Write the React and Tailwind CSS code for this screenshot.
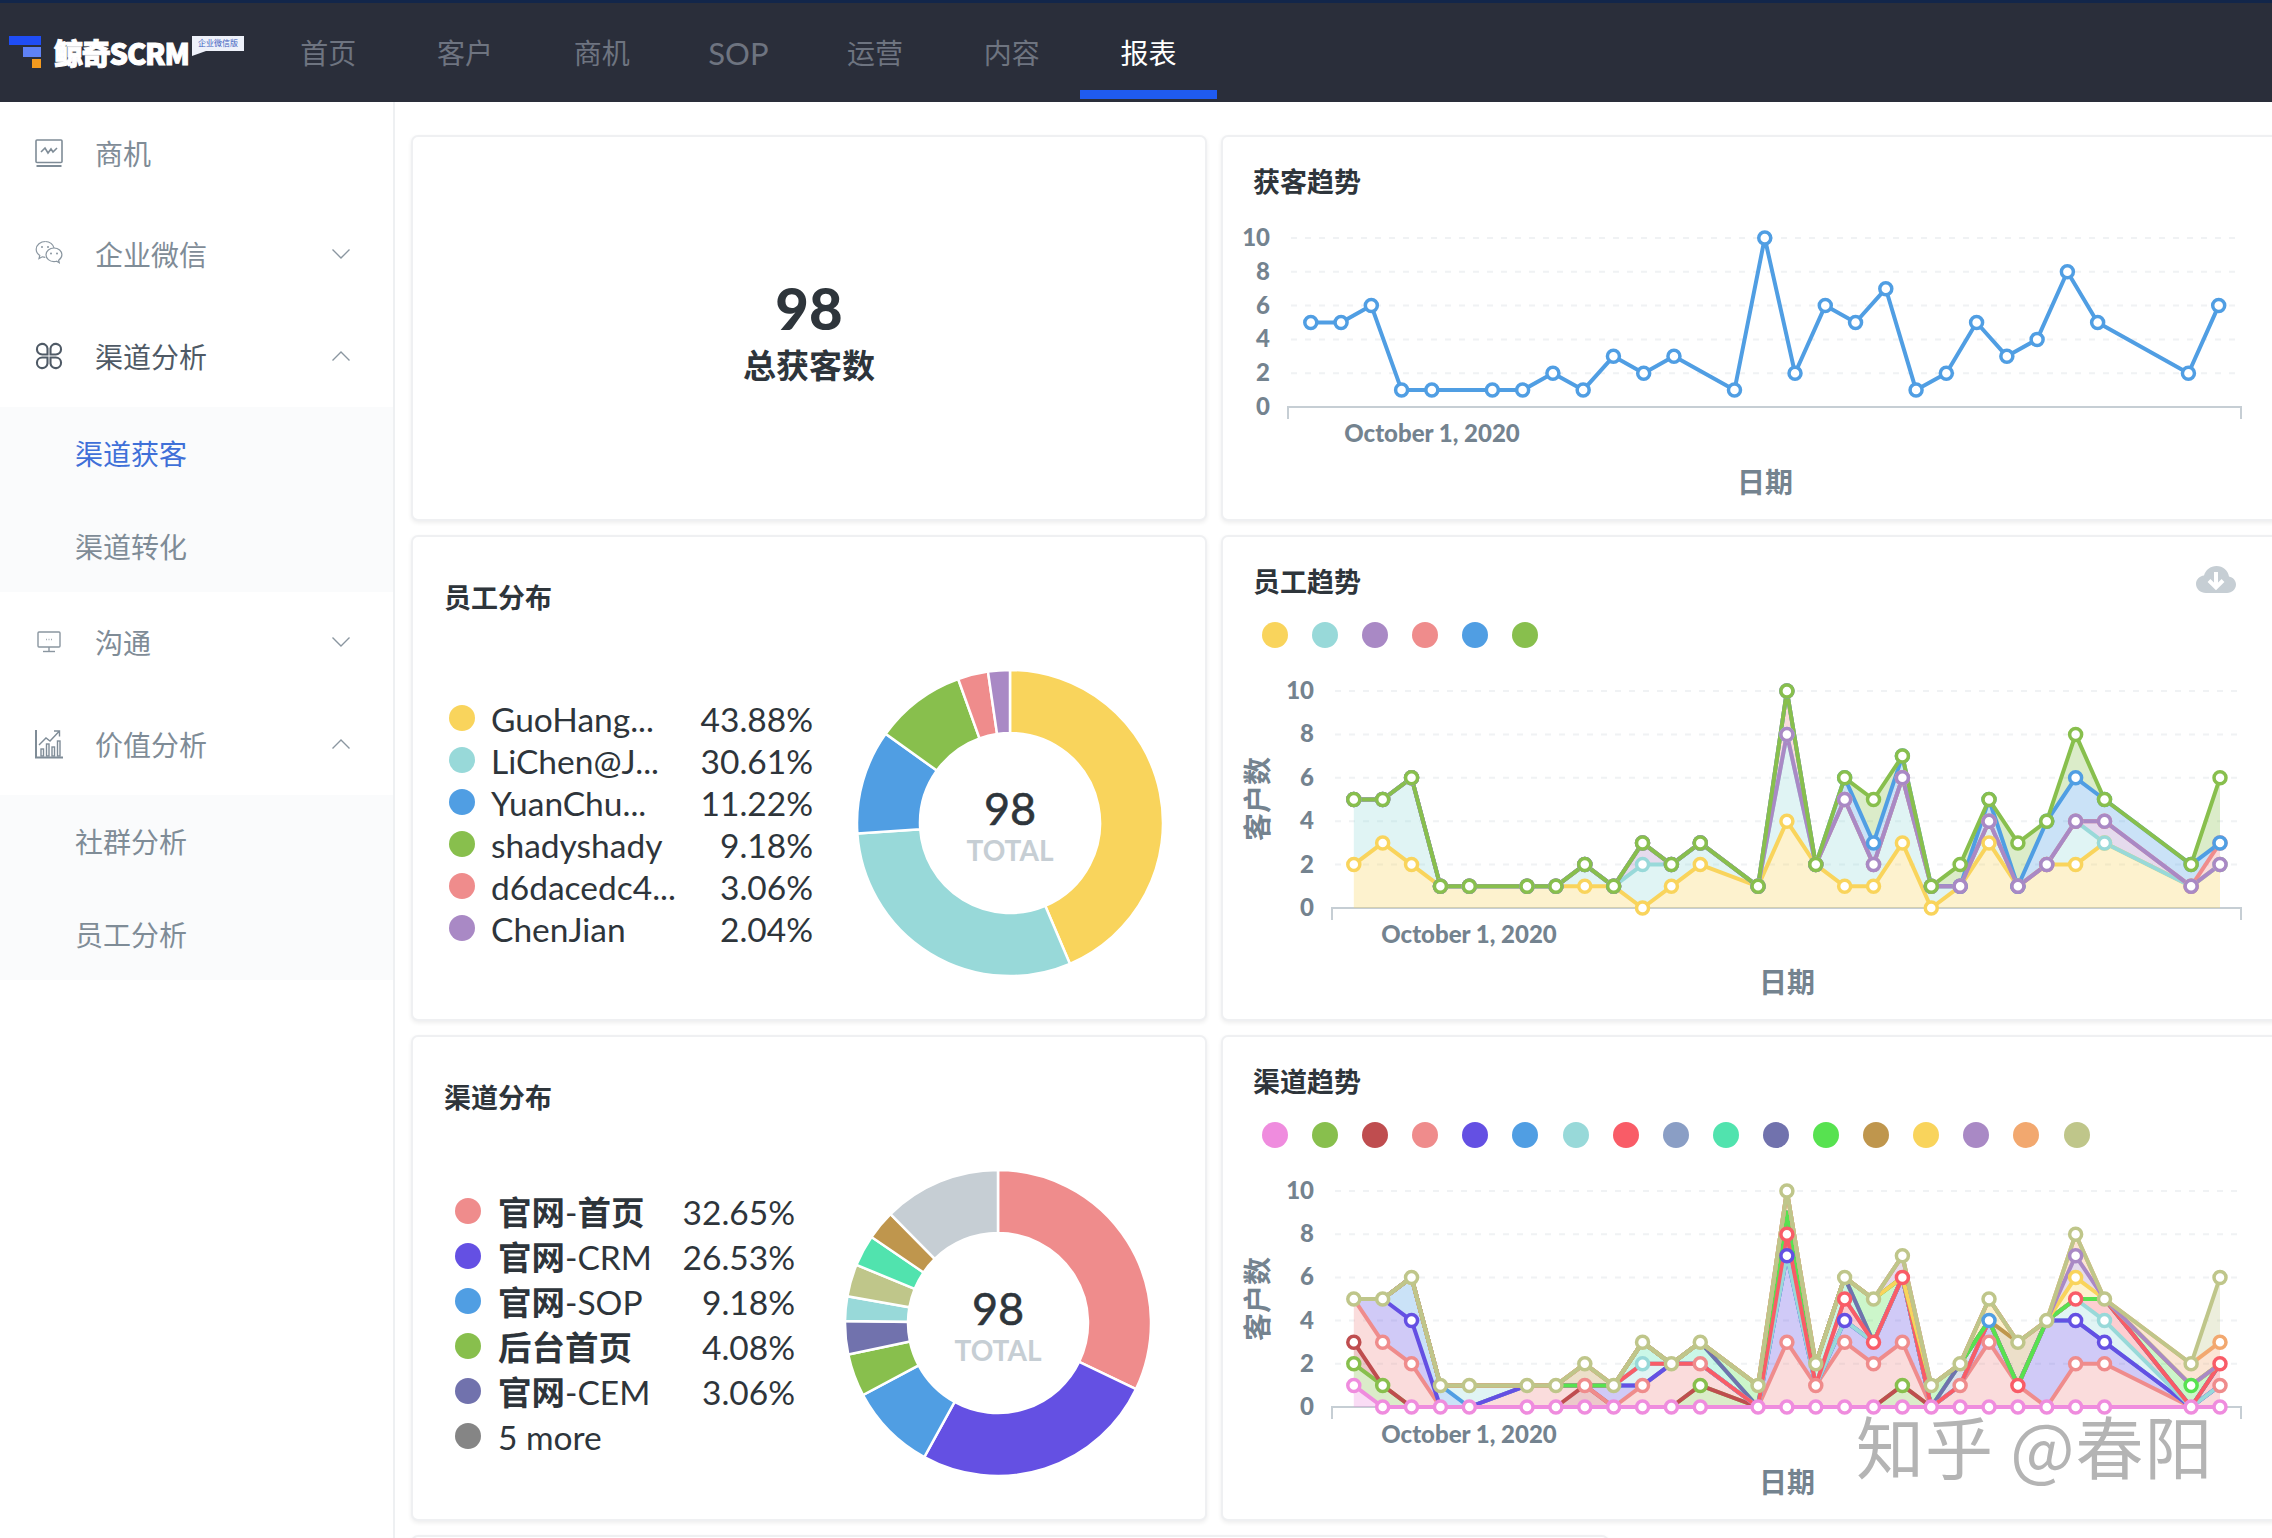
import React from "react";

const C = {
  yellow: "#F9D45C", teal: "#98D9D9", purple: "#A989C5", coral: "#EF8C8C", blue: "#509EE3", green: "#88BF4D",
  pink: "#EF8CDE", red: "#BF4D4F", indigo: "#6450E3", red2: "#F95C67", slate: "#8A9EC5", mint: "#51E3AE",
  ind2: "#7172AD", green2: "#57E250", brown: "#BF964D", orange: "#F2A86F", khaki: "#BFC68A", gray: "#C6CED4",
};

const IDX = [0,1,2,3,4,6,7,8,9,10,11,12,14,15,16,17,18,19,20,21,22,23,24,25,26,29,30];
const TOTAL = [5,5,6,1,1,1,1,2,1,3,2,3,1,10,2,6,5,7,1,2,5,3,4,8,5,2,6];

const S2 = [
  { c: C.yellow, z: 0, v: [2,3,2,1,1,1,1,1,1,0,1,2,1,4,2,1,1,3,0,1,3,1,2,2,3,1,2] },
  { c: C.teal, z: 1, v: [5,5,6,1,1,1,1,2,1,2,2,3,1,8,2,5,2,6,1,1,4,1,2,4,3,1,2] },
  { c: C.purple, z: 4, v: [5,5,6,1,1,1,1,2,1,3,2,3,1,8,2,5,2,6,1,1,4,1,2,4,4,1,2] },
  { c: C.coral, z: 2, v: [5,5,6,1,1,1,1,2,1,3,2,3,1,10,2,5,2,6,1,1,4,1,2,4,4,1,3] },
  { c: C.blue, z: 3, v: [5,5,6,1,1,1,1,2,1,3,2,3,1,10,2,6,3,7,1,1,5,1,4,6,5,2,3] },
  { c: C.green, z: 5, v: TOTAL },
];

const S3 = [
  { c: C.pink, z: 99, v: [1,0,0,0,0,0,0,0,0,0,0,0,0,0,0,0,0,0,0,0,0,0,0,0,0,0,0] },
  { c: C.green, z: 1, dots: [0,1,11,17], v: [2,1,0,0,0,0,0,0,0,0,0,1,0,0,0,0,0,1,0,0,0,0,0,0,0,0,0] },
  { c: C.red, z: 2, dots: [0], v: [3,1,0,0,0,0,0,1,0,0,0,1,0,0,0,0,0,1,0,0,0,0,0,0,0,0,0] },
  { c: C.coral, z: 3, dots: [1,2,7,9,11,13,14,15,16,17,19,20,23,24,26], v: [5,3,2,0,0,1,1,1,0,1,2,2,0,3,1,3,2,3,0,1,3,1,0,2,2,0,1] },
  { c: C.indigo, z: 5, dots: [2,13,15,23,24], v: [5,5,4,0,0,1,1,1,1,1,2,2,0,7,1,4,3,6,0,1,4,1,4,4,3,0,1] },
  { c: C.blue, z: 4, dots: [20], v: [5,5,6,1,0,1,1,1,1,1,2,2,0,7,1,4,3,6,0,1,4,1,4,4,3,0,1] },
  { c: C.teal, z: 6, dots: [9,24], v: [5,5,6,1,1,1,1,1,1,2,2,2,0,7,1,4,3,6,0,1,4,1,4,5,4,0,1] },
  { c: C.red2, z: 7, dots: [13,15,16,17,21,23,26], v: [5,5,6,1,1,1,1,1,1,2,2,2,0,8,1,5,3,6,0,1,4,1,4,5,5,0,2] },
  { c: C.slate, z: 1, dots: [], v: [5,5,6,1,1,1,1,1,1,2,2,2,0,8,1,5,3,6,0,2,4,1,4,5,5,0,2] },
  { c: C.mint, z: 1, dots: [], v: [5,5,6,1,1,1,1,1,1,3,2,3,0,9,2,6,3,6,0,2,4,1,4,5,5,0,2] },
  { c: C.ind2, z: 1, dots: [], v: [5,5,6,1,1,1,1,1,1,3,2,3,0,9,2,6,3,6,0,2,4,1,4,5,5,0,2] },
  { c: C.green2, z: 8, dots: [25], v: [5,5,6,1,1,1,1,1,1,3,2,3,1,9,2,6,5,6,1,2,4,1,4,5,5,1,2] },
  { c: C.brown, z: 1, dots: [], v: [5,5,6,1,1,1,1,2,1,3,2,3,1,9,2,6,5,6,1,2,4,3,4,5,5,1,2] },
  { c: C.yellow, z: 9, dots: [23], v: [5,5,6,1,1,1,1,2,1,3,2,3,1,10,2,6,5,6,1,2,5,3,4,6,5,1,2] },
  { c: C.purple, z: 10, dots: [23], v: [5,5,6,1,1,1,1,2,1,3,2,3,1,10,2,6,5,7,1,2,5,3,4,7,5,1,2] },
  { c: C.orange, z: 11, dots: [26], v: [5,5,6,1,1,1,1,2,1,3,2,3,1,10,2,6,5,7,1,2,5,3,4,8,5,2,3] },
  { c: C.khaki, z: 12, v: TOTAL },
];
const LEG3 = [C.pink,C.green,C.red,C.coral,C.indigo,C.blue,C.teal,C.red2,C.slate,C.mint,C.ind2,C.green2,C.brown,C.yellow,C.purple,C.orange,C.khaki];

const LBL = "#74838F";

function Chart({ top, height, series, x0, x30, yTop, y0, axisL, yLabelX, dateX, dateY, xTitleX, xTitleY, yTitleY, area }) {
  const X = (i) => x0 + ((x30 - x0) * IDX[i]) / 30;
  const Y = (v) => y0 - ((y0 - yTop) * v) / 10;
  const pts = (v) => v.map((n, i) => `${X(i)},${Y(n)}`).join(" ");
  const order = [...series].sort((a, b) => (a.z || 0) - (b.z || 0));
  return (
    <svg width="1096" height={height} viewBox={`1223 ${top} 1096 ${height}`} className="block">
      {[2, 4, 6, 8, 10].map((t) => (
        <line key={t} x1={axisL + 3} x2="2241" y1={Y(t)} y2={Y(t)} stroke="#F0F2F4" strokeWidth="2" strokeDasharray="6 8" />
      ))}
      <path d={`M${axisL} ${y0 + 12}V${y0}H2241V${y0 + 12}`} fill="none" stroke="#C6CED4" strokeWidth="2" />
      {[0, 2, 4, 6, 8, 10].map((t) => (
        <text key={t} x={yLabelX} y={Y(t) + 8} textAnchor="end" fontSize="24" fontWeight="900" fill={LBL}>{t}</text>
      ))}
      {area && series.map((s, k) => {
        const lower = k === 0 ? s.v.map(() => 0) : series[k - 1].v;
        const poly = [...s.v.map((n, i) => `${X(i)},${Y(n)}`), ...lower.map((n, i) => `${X(i)},${Y(n)}`).reverse()].join(" ");
        return <polygon key={k} points={poly} fill={s.c} fillOpacity="0.3" />;
      })}
      {order.map((s, k) => (
        <polyline key={k} points={pts(s.v)} fill="none" stroke={s.c} strokeWidth="4" strokeLinejoin="round" />
      ))}
      {order.map((s, k) => (
        <g key={k}>
          {s.v.map((n, i) =>
            !s.dots || s.dots.includes(i) ? (
              <circle key={i} cx={X(i)} cy={Y(n)} r="6" fill="#fff" stroke={s.c} strokeWidth="3.5" />
            ) : null
          )}
        </g>
      ))}
      <text x={dateX} y={dateY + 8} textAnchor="middle" fontSize="24" fontWeight="900" fill={LBL}>October 1, 2020</text>
      <text x={xTitleX} y={xTitleY + 10} textAnchor="middle" fontSize="28" fontWeight="700" fill={LBL}>日期</text>
      {yTitleY && (
        <text transform={`translate(1268 ${yTitleY}) rotate(-90)`} textAnchor="middle" fontSize="28" fontWeight="700" fill={LBL}>客户数</text>
      )}
    </svg>
  );
}

function Donut({ data }) {
  const R = 153, r = 90, c = 153;
  let a = 0;
  const pt = (rad, ang) => [c + rad * Math.sin(ang), c - rad * Math.cos(ang)];
  return (
    <svg width="306" height="306" viewBox="0 0 306 306" className="block shrink-0">
      {data.map(([color, p], i) => {
        const s = a, e = a + (p / 100) * Math.PI * 2;
        a = e;
        const [x1, y1] = pt(R, s), [x2, y2] = pt(R, e), [x3, y3] = pt(r, e), [x4, y4] = pt(r, s);
        const large = e - s > Math.PI ? 1 : 0;
        return (
          <path key={i} d={`M${x1} ${y1}A${R} ${R} 0 ${large} 1 ${x2} ${y2}L${x3} ${y3}A${r} ${r} 0 ${large} 0 ${x4} ${y4}Z`} fill={color} stroke="#fff" strokeWidth="2.5" />
        );
      })}
      <text x="153" y="155" textAnchor="middle" fontSize="45" fill="#2E353B" stroke="#2E353B" strokeWidth="0.6" fontWeight="400">98</text>
      <text x="153" y="191" textAnchor="middle" fontSize="28" fill="#C6CED4" fontWeight="700">TOTAL</text>
    </svg>
  );
}

function Card({ children, className = "" }) {
  return <div className={`box-border border-2 border-[#EFF0F2] rounded-[7px] bg-white shadow-[0_2px_4px_rgba(0,0,0,0.07)] ${className}`}>{children}</div>;
}

function Title({ children, className = "" }) {
  return <div className={`text-[27px] leading-[36px] font-bold text-[#2E353B] ${className}`}>{children}</div>;
}

function Dots({ colors }) {
  return (
    <div className="flex gap-[24.1px] pl-[39px] mt-[22px]">
      {colors.map((c, i) => (
        <span key={i} className="block w-[26px] h-[26px] rounded-full" style={{ backgroundColor: c }} />
      ))}
    </div>
  );
}

function LegendRow({ color, name, pct, rowClass, gapClass }) {
  return (
    <div className={`flex items-center text-[33.5px] text-[#2E353B] ${rowClass}`}>
      <span className="block w-[26px] h-[26px] rounded-full shrink-0" style={{ backgroundColor: color }} />
      <span className={`flex-1 whitespace-nowrap pt-[3px] ${gapClass}`}>{name}</span>
      <span className="pt-[3px]">{pct}</span>
    </div>
  );
}

const Chevron = ({ up }) => (
  <svg width="18" height="10" viewBox="0 0 18 10" className="ml-auto" fill="none" stroke="#8A96A0" strokeWidth="1.4">
    <polyline points={up ? "0.5,9.5 9,1 17.5,9.5" : "0.5,0.5 9,9 17.5,0.5"} />
  </svg>
);

const IconMonitorWave = () => (
  <svg width="28" height="28" viewBox="0 0 28 28" fill="none" stroke="#7F8C97" strokeWidth="1.6">
    <rect x="1" y="1" width="26" height="22.5" rx="1" />
    <polyline points="6,13 10,9 13,14 16,10 18,13 22,9" />
    <line x1="1.5" y1="27" x2="26.5" y2="27" strokeWidth="2" />
  </svg>
);
const IconWechat = () => (
  <svg width="28" height="28" viewBox="0 0 28 28" fill="none" stroke="#8A96A0" strokeWidth="1.2">
    <path d="M10.5 1.5C5.5 1.5 1.2 4.9 1.2 9.3c0 2.6 1.4 4.7 3.6 6.2l-.8 3 3.3-1.7c1 .3 2 .5 3 .5" />
    <path d="M19 8c-4.400 0-8 3-8 6.800s3.600 6.800 8 6.800c.900 0 1.800-.100 2.600-.400l2.700 1.500-.700-2.500c2-1.300 3.300-3.200 3.300-5.400C27 11 23.400 8 19 8Z" />
    <path d="M19 8c-.7-3.700-4.300-6.500-8.500-6.500" />
    <circle cx="7" cy="7" r="1" fill="#8A96A0" stroke="none" />
    <circle cx="13" cy="7" r="1" fill="#8A96A0" stroke="none" />
    <circle cx="16" cy="13.500" r="1" fill="#8A96A0" stroke="none" />
    <circle cx="22" cy="13.500" r="1" fill="#8A96A0" stroke="none" />
  </svg>
);
const IconGrid = () => (
  <svg width="30" height="30" viewBox="0 0 28 28" fill="none" stroke="#4F5A66" strokeWidth="2.1">
    <path d="M12.500 12.500V6.500a5.300 5.300 0 1 0-5.300 6Z" />
    <path d="M15.500 12.500V6.500a5.300 5.300 0 1 1 5.300 6Z" />
    <path d="M12.500 15.500V21.500a5.300 5.300 0 1 1-5.300-6Z" />
    <path d="M15.500 15.500V21.500a5.300 5.300 0 1 0 5.300-6Z" />
  </svg>
);
const IconScreen = () => (
  <svg width="24" height="22" viewBox="0 0 24 22" fill="none" stroke="#8A96A0" strokeWidth="1.4">
    <rect x="1" y="1" width="22" height="15" rx="1" />
    <line x1="12" y1="16" x2="12" y2="20" />
    <line x1="6" y1="20.500" x2="18" y2="20.500" />
    <path d="M9 8.500h.8M11.600 8.500h.8M14.200 8.500h.8" />
  </svg>
);
const IconChart = () => (
  <svg width="28" height="30" viewBox="0 0 28 30" fill="none" stroke="#7F8C97" strokeWidth="1.4">
    <path d="M1 1V28.500H28" strokeWidth="2" />
    <rect x="6" y="20" width="2.500" height="7" />
    <rect x="11.500" y="15" width="2.500" height="12" />
    <rect x="17" y="18" width="2.500" height="9" />
    <rect x="22.500" y="12" width="2.500" height="15" />
    <path d="M4 16 11 9l4 3 9-9.500M19 2h5.500v5.500" />
  </svg>
);

function MenuRow({ icon, label, chev, color = "text-[#7F8C97]" }) {
  return (
    <div className="flex items-center h-[101.5px] pl-[35px] pr-[43px]">
      <span className="w-[28px] flex justify-center shrink-0">{icon}</span>
      <span className={`text-[28px] leading-none ml-[32px] pt-[2px] ${color}`}>{label}</span>
      {chev && <Chevron up={chev === "up"} />}
    </div>
  );
}

function SubRow({ label, active }) {
  return (
    <div className={`flex items-center h-[92.5px] pl-[75px] pt-[3px] text-[28px] ${active ? "text-[#3F70D8]" : "text-[#7F8C97]"}`}>{label}</div>
  );
}

const NAV = ["首页", "客户", "商机", "SOP", "运营", "内容", "报表"];

export default function App() {
  return (
    <div className="relative w-[2272px] h-[1538px] overflow-hidden bg-white flex flex-col font-['Lato','Noto_Sans_CJK_SC',sans-serif]">
      <header className="h-[102px] shrink-0 box-border border-t-[3px] border-[#12264A] bg-[#2A2E3A] flex items-start">
        <div className="w-[260px] shrink-0 pl-[9px] pt-[33px] flex items-start">
          <svg width="32" height="32" viewBox="0 0 32 32" className="shrink-0">
            <rect x="0" y="0" width="32" height="9" fill="#1F4DF5" />
            <rect x="14" y="11" width="18" height="10" fill="#5F82F6" />
            <rect x="23" y="23" width="9" height="9" fill="#F39A1F" />
          </svg>
          <span className="ml-[13px] mt-[-2px] w-[135px] shrink-0 text-[29px] leading-[36px] font-black text-white tracking-[-1.2px] whitespace-nowrap [-webkit-text-stroke:1px_#fff] font-['Noto_Sans_CJK_SC',sans-serif]">鲸奇SCRM</span>
          <span className="relative ml-[3px] w-[52px] h-[15px] shrink-0 bg-[#EEF1FA] text-[8px] leading-[15px] text-center text-[#3F5FC0] whitespace-nowrap">
            企业微信版
            <svg width="14" height="5" viewBox="0 0 14 5" className="absolute left-0 top-[15px]"><polygon points="0,0 14,0 0,5" fill="#EEF1FA" /></svg>
          </span>
        </div>
        <nav className="flex">
          {NAV.map((n) => (
            <div key={n} className={`w-[136.7px] h-[96px] box-border flex items-center justify-center pt-[13px] border-b-[9px] ${n === "SOP" ? "text-[31px]" : "text-[28px]"} ${n === "报表" ? "text-white border-[#1F5BF0]" : "text-[#6E7480] border-transparent"}`}>{n}</div>
          ))}
        </nav>
      </header>

      <div className="flex flex-1 min-h-0">
        <aside className="w-[395px] shrink-0 box-border border-r-2 border-[#EEF0F2]">
          <MenuRow icon={<IconMonitorWave />} label="商机" />
          <MenuRow icon={<IconWechat />} label="企业微信" chev="down" />
          <MenuRow icon={<IconGrid />} label="渠道分析" chev="up" color="text-[#4F5A66]" />
          <div className="bg-[#FAFBFC]">
            <SubRow label="渠道获客" active />
            <SubRow label="渠道转化" />
          </div>
          <MenuRow icon={<IconScreen />} label="沟通" chev="down" />
          <MenuRow icon={<IconChart />} label="价值分析" chev="up" />
          <div className="bg-[#FAFBFC]">
            <SubRow label="社群分析" />
            <SubRow label="员工分析" />
          </div>
        </aside>

        <main className="flex-1 min-w-0 overflow-hidden pl-[16px] pt-[33px]">
          <div className="grid grid-cols-[796px_1100px] grid-rows-[386px_486px_486px_100px] gap-x-[14px] gap-y-[14px]">
            <Card className="flex flex-col items-center justify-center pt-[6px]">
              <div className="text-[58px] leading-[60px] font-black text-[#2E353B]">98</div>
              <div className="mt-[7px] text-[33px] leading-[40px] font-bold text-[#2E353B]">总获客数</div>
            </Card>

            <Card className="overflow-hidden">
              <Title className="pl-[30px] pt-[27px]">获客趋势</Title>
              <Chart top={200} height={316} series={[{ c: C.blue, v: TOTAL }]} x0={1310.8} x30={2218.7} yTop={238} y0={407} axisL={1288} yLabelX={1270} dateX={1432} dateY={434} xTitleX={1765} xTitleY={483} />
            </Card>

            <Card>
              <Title className="pl-[31px] pt-[43px]">员工分布</Title>
              <div className="flex items-center mt-[54px] pl-[36px]">
                <div className="w-[364px] shrink-0">
                  {[[C.yellow,"GuoHang...","43.88%"],[C.teal,"LiChen@J...","30.61%"],[C.blue,"YuanChu...","11.22%"],[C.green,"shadyshady","9.18%"],[C.coral,"d6dacedc4...","3.06%"],[C.purple,"ChenJian","2.04%"]].map(([c,n,p]) => (
                    <LegendRow key={n} color={c} name={n} pct={p} rowClass="h-[42px]" gapClass="ml-[16px]" />
                  ))}
                </div>
                <div className="ml-[44px]">
                  <Donut data={[[C.yellow,43.6],[C.teal,30.3],[C.blue,11],[C.green,9.6],[C.coral,3.2],[C.purple,2.3]]} />
                </div>
              </div>
            </Card>

            <Card className="overflow-hidden">
              <div className="flex items-start justify-between w-[983px] ml-[30px] pt-[27px]">
                <Title>员工趋势</Title>
                <svg width="40" height="28" viewBox="0 0 40 28" className="mt-[2px]">
                  <path d="M10 27C4.500 27 0 23 0 18c0-4.500 3.500-8 8-8.500C9.500 4 14.500 0 20.500 0 27 0 32 4.500 33 10.500c4 .8 7 4 7 8 0 4.700-4 8.500-9 8.500Z" fill="#C6CED4" />
                  <path d="M20 6v15M13 14.500 20 21.500 27 14.500" fill="none" stroke="#fff" strokeWidth="4" />
                </svg>
              </div>
              <Dots colors={[C.yellow, C.teal, C.purple, C.coral, C.blue, C.green]} />
              <Chart top={648} height={370} series={S2} area x0={1353.8} x30={2220} yTop={691} y0={908} axisL={1332} yLabelX={1314} dateX={1469} dateY={935} xTitleX={1787} xTitleY={983} yTitleY={799} />
            </Card>

            <Card>
              <Title className="pl-[31px] pt-[43px]">渠道分布</Title>
              <div className="flex items-center mt-[54px] pl-[42px]">
                <div className="w-[340px] shrink-0">
                  {[[C.coral,<><b>官网</b>-<b>首页</b></>,"32.65%"],[C.indigo,<><b>官网</b>-CRM</>,"26.53%"],[C.blue,<><b>官网</b>-SOP</>,"9.18%"],[C.green,<b>后台首页</b>,"4.08%"],[C.ind2,<><b>官网</b>-CEM</>,"3.06%"],["#858585","5 more",""]].map(([c,n,p],i) => (
                    <LegendRow key={i} color={c} name={n} pct={p} rowClass="h-[45px]" gapClass="ml-[17px]" />
                  ))}
                </div>
                <div className="ml-[50px]">
                  <Donut data={[[C.coral,32.1],[C.indigo,25.9],[C.blue,9.2],[C.green,4.5],[C.ind2,3.5],[C.teal,2.6],[C.khaki,3.4],[C.mint,3.3],[C.brown,3.1],[C.gray,12.4]]} />
                </div>
              </div>
            </Card>

            <Card className="overflow-hidden">
              <Title className="pl-[30px] pt-[27px]">渠道趋势</Title>
              <Dots colors={LEG3} />
              <Chart top={1148} height={370} series={S3} area x0={1353.8} x30={2220} yTop={1191} y0={1407} axisL={1332} yLabelX={1314} dateX={1469} dateY={1435} xTitleX={1787} xTitleY={1483} yTitleY={1299} />
            </Card>

            <Card className="col-span-2 w-[1198px]" />
          </div>
        </main>
      </div>

      <div className="absolute left-[1856px] top-[1400px] text-[68px] leading-[90px] tracking-[1px] text-[#B4B4B4] whitespace-nowrap [text-shadow:0_0_2px_#fff] font-['Noto_Sans_CJK_SC',sans-serif]">知乎 @春阳</div>
    </div>
  );
}
